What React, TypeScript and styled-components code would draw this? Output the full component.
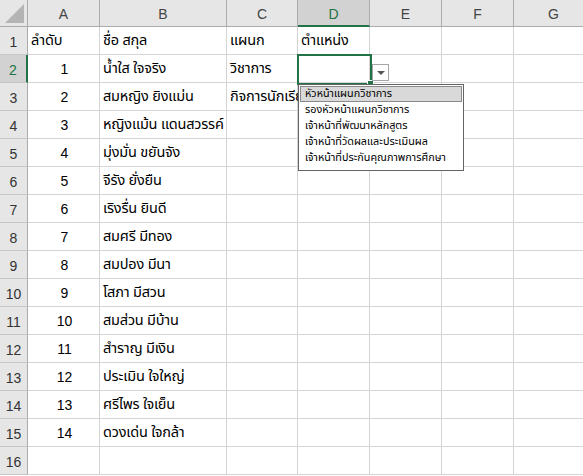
import React from "react";
import styled, { createGlobalStyle } from "styled-components";

const GlobalStyle = createGlobalStyle`
  html, body {
    margin: 0;
    padding: 0;
    background: #ffffff;
    overflow: hidden;
  }
  body {
    font-family: "Noto Sans Thai", "Leelawadee UI", Tahoma, "Noto Sans", "DejaVu Sans", sans-serif;
  }
`;

const COLS = [
  { key: "A", width: 72 },
  { key: "B", width: 127 },
  { key: "C", width: 71 },
  { key: "D", width: 72 },
  { key: "E", width: 72 },
  { key: "F", width: 72 },
  { key: "G", width: 80 },
];

const rows: [string, string, string, string][] = [
  ["ลำดับ", "ชื่อ สกุล", "แผนก", "ตำแหน่ง"],
  ["1", "น้ำใส ใจจริง", "วิชาการ", ""],
  ["2", "สมหญิง ยิงแม่น", "กิจการนักเรียน", ""],
  ["3", "หญิงแม้น แดนสวรรค์", "", ""],
  ["4", "มุ่งมั่น ขยันจัง", "", ""],
  ["5", "จีรัง ยั่งยืน", "", ""],
  ["6", "เริงรื่น ยินดี", "", ""],
  ["7", "สมศรี มีทอง", "", ""],
  ["8", "สมปอง มีนา", "", ""],
  ["9", "โสภา มีสวน", "", ""],
  ["10", "สมส่วน มีบ้าน", "", ""],
  ["11", "สำราญ มีเงิน", "", ""],
  ["12", "ประเมิน ใจใหญ่", "", ""],
  ["13", "ศรีไพร ใจเย็น", "", ""],
  ["14", "ดวงเด่น ใจกล้า", "", ""],
  ["", "", "", ""],
];

const options = [
  "หัวหน้าแผนกวิชาการ",
  "รองหัวหน้าแผนกวิชาการ",
  "เจ้าหน้าที่พัฒนาหลักสูตร",
  "เจ้าหน้าที่วัดผลและประเมินผล",
  "เจ้าหน้าที่ประกันคุณภาพการศึกษา",
];

const Sheet = styled.div`
  position: relative;
  display: grid;
  grid-template-columns: 28px ${COLS.map((c) => `${c.width}px`).join(" ")};
  grid-auto-rows: 28px;
  grid-template-rows: 27px;
  width: 583px;
  height: 476px;
  overflow: hidden;
`;

const Corner = styled.div`
  position: relative;
  background: #e6e6e6;
  border-right: 1px solid #ababab;
  border-bottom: 1px solid #ababab;
  &::after {
    content: "";
    position: absolute;
    right: 3px;
    bottom: 3px;
    width: 0;
    height: 0;
    border-left: 19px solid transparent;
    border-bottom: 19px solid #b4b4b4;
  }
`;

const ColHead = styled.div<{ $active?: boolean }>`
  display: flex;
  align-items: center;
  justify-content: center;
  background: ${({ $active }) => ($active ? "#d2d2d2" : "#e6e6e6")};
  color: ${({ $active }) => ($active ? "#217346" : "#444444")};
  border-right: 1px solid #ababab;
  border-bottom: ${({ $active }) => ($active ? "2px solid #217346" : "1px solid #ababab")};
  font-family: "Liberation Sans", Arial, sans-serif;
  font-size: 14px;
  padding-top: 2px;
  box-sizing: border-box;
`;

const RowHead = styled.div<{ $active?: boolean }>`
  display: flex;
  align-items: center;
  justify-content: center;
  background: ${({ $active }) => ($active ? "#d2d2d2" : "#e6e6e6")};
  color: ${({ $active }) => ($active ? "#217346" : "#333333")};
  border-right: ${({ $active }) => ($active ? "2px solid #217346" : "1px solid #ababab")};
  border-bottom: 1px solid #c6c6c6;
  font-family: "Liberation Sans", Arial, sans-serif;
  font-size: 14px;
  padding-top: 2px;
  box-sizing: border-box;
`;

const Cell = styled.div<{ $center?: boolean; $overflow?: boolean }>`
  position: relative;
  display: flex;
  align-items: flex-end;
  justify-content: ${({ $center }) => ($center ? "center" : "flex-start")};
  padding: 0 3px 2px 3px;
  box-sizing: border-box;
  border-right: 1px solid #d4d4d4;
  border-bottom: 1px solid #d4d4d4;
  background: #ffffff;
  color: #000000;
  font-size: 14.5px;
  letter-spacing: -0.2px;
  line-height: 22px;
  white-space: nowrap;
  overflow: ${({ $overflow }) => ($overflow ? "visible" : "hidden")};
  z-index: ${({ $overflow }) => ($overflow ? 1 : 0)};
`;

const NumText = styled.span`
  font-family: "Liberation Sans", Arial, sans-serif;
  font-size: 14px;
  letter-spacing: 0;
  padding-left: 2px;
`;

const Selection = styled.div`
  position: absolute;
  left: 297px;
  top: 54px;
  width: 75px;
  height: 31px;
  box-sizing: border-box;
  border: 2px solid #217346;
  z-index: 3;
  &::after {
    content: "";
    position: absolute;
    right: -4px;
    bottom: -4px;
    width: 5px;
    height: 5px;
    background: #217346;
    border: 1px solid #ffffff;
  }
`;

const DropButton = styled.div`
  position: absolute;
  left: 372px;
  top: 64px;
  width: 17px;
  height: 17px;
  box-sizing: border-box;
  border: 1px solid #a6a6a6;
  background: #ffffff;
  display: flex;
  align-items: center;
  justify-content: center;
  z-index: 3;
`;

const Arrow = styled.span`
  width: 0;
  height: 0;
  border-left: 4px solid transparent;
  border-right: 4px solid transparent;
  border-top: 4px solid #555555;
`;

const List = styled.div`
  position: absolute;
  left: 298px;
  top: 84px;
  width: 166px;
  height: 87px;
  box-sizing: border-box;
  border: 1px solid #646464;
  background: #ffffff;
  padding: 1px;
  display: flex;
  flex-direction: column;
  z-index: 4;
`;

const Option = styled.div<{ $active?: boolean }>`
  height: 16px;
  box-sizing: border-box;
  padding-left: 4px;
  display: flex;
  align-items: center;
  font-family: Tahoma, "Noto Sans Thai", "DejaVu Sans", sans-serif;
  font-size: 10.8px;
  color: #000000;
  white-space: nowrap;
  background: ${({ $active }) => ($active ? "#d9d9d9" : "transparent")};
  border: 1px solid ${({ $active }) => ($active ? "#8a8a8a" : "transparent")};
`;

export default function App() {
  return (
    <>
      <GlobalStyle />
      <Sheet>
        <Corner />
        {COLS.map((c) => (
          <ColHead key={c.key} $active={c.key === "D"}>
            {c.key}
          </ColHead>
        ))}
        {rows.map((r, i) => (
          <React.Fragment key={i}>
            <RowHead $active={i === 1}>{i + 1}</RowHead>
            <Cell $center={i > 0}>
              {i > 0 ? <NumText>{r[0]}</NumText> : r[0]}
            </Cell>
            <Cell $overflow={i === 3}>{r[1]}</Cell>
            <Cell $overflow={i === 2}>{r[2]}</Cell>
            <Cell>{r[3]}</Cell>
            <Cell />
            <Cell />
            <Cell />
          </React.Fragment>
        ))}
        <Selection />
        <DropButton>
          <Arrow />
        </DropButton>
        <List>
          {options.map((o, i) => (
            <Option key={o} $active={i === 0}>
              {o}
            </Option>
          ))}
        </List>
      </Sheet>
    </>
  );
}
